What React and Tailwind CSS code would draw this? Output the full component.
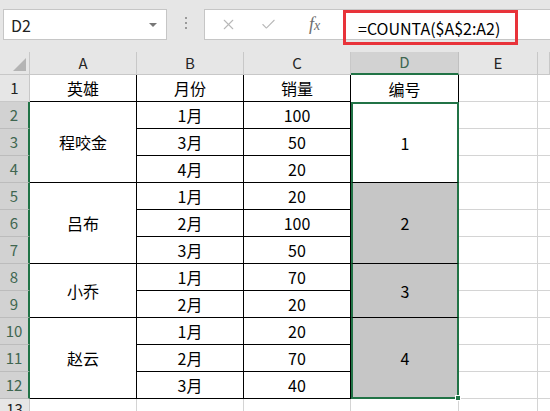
import React from 'react';
import { X, Check } from 'lucide-react';

const font = { fontFamily: '"Noto Sans CJK SC", "Noto Sans", sans-serif' };

const rows = [
  { n: 2, b: '1月', c: '100', a: { t: '程咬金', span: 'row-span-3' }, d: { t: '1', span: 'row-span-3', first: true } },
  { n: 3, b: '3月', c: '50' },
  { n: 4, b: '4月', c: '20' },
  { n: 5, b: '1月', c: '20', a: { t: '吕布', span: 'row-span-3' }, d: { t: '2', span: 'row-span-3' } },
  { n: 6, b: '2月', c: '100' },
  { n: 7, b: '3月', c: '50' },
  { n: 8, b: '1月', c: '70', a: { t: '小乔', span: 'row-span-2' }, d: { t: '3', span: 'row-span-2' } },
  { n: 9, b: '2月', c: '20' },
  { n: 10, b: '1月', c: '20', a: { t: '赵云', span: 'row-span-3' }, d: { t: '4', span: 'row-span-3', last: true } },
  { n: 11, b: '2月', c: '70' },
  { n: 12, b: '3月', c: '40' },
];

function ColHead({ label, sel }) {
  return (
    <div
      className={
        sel
          ? 'flex items-center justify-center bg-[#d2d2d2] border-r border-[#c0c0c0] border-b-2 border-b-[#217346] text-[15px] text-[#3f6650]'
          : 'flex items-center justify-center bg-[#e6e6e6] border-r border-b border-[#c8c8c8] text-[15px] text-[#262626]'
      }
    >
      {label}
    </div>
  );
}

function Cell({ children, className = '' }) {
  return (
    <div className={`flex items-center justify-center text-[16px] text-black ${className}`}>
      {children}
    </div>
  );
}

export default function App() {
  return (
    <div className="w-[550px] h-[411px] overflow-hidden bg-white" style={font}>
      {/* formula bar */}
      <div className="relative h-[52px] bg-[#e6e6e6] flex items-start">
        <div className="mt-[9px] ml-[3px] w-[164px] h-[31px] bg-white border border-[#c6c6c6] flex items-center justify-between pl-[7px] pr-[9px]">
          <span className="text-[16px] text-[#222]">D2</span>
          <span className="w-0 h-0 border-l-[4px] border-r-[4px] border-t-[4px] border-l-transparent border-r-transparent border-t-[#777]" />
        </div>
        <div className="mt-[17px] ml-[18px] flex flex-col gap-[3px]">
          <span className="w-[2px] h-[2px] bg-[#9a9a9a]" />
          <span className="w-[2px] h-[2px] bg-[#9a9a9a]" />
          <span className="w-[2px] h-[2px] bg-[#9a9a9a]" />
        </div>
        <div className="mt-[9px] ml-[17px] flex-1 h-[31px] bg-white border-y border-l border-[#c6c6c6] flex items-center">
          <X className="ml-[15px] text-[#b8b8b8]" size={17} strokeWidth={1.5} />
          <Check className="ml-[23px] text-[#b8b8b8]" size={17} strokeWidth={1.5} />
          <span className="ml-[32px] text-[18px] italic text-[#6e6e6e]" style={{ fontFamily: '"Liberation Serif", serif' }}>
            f<span className="text-[14px]">x</span>
          </span>
        </div>
        <div className="absolute left-[343px] top-[10px] w-[175px] h-[35px] border-[3px] border-[#e8333a] flex items-center pl-[12px]">
          <span className="text-[16px] text-black">=COUNTA($A$2:A2)</span>
        </div>
      </div>

      {/* sheet grid */}
      <div className="grid grid-cols-[30px_107px_107px_107px_108px_79px_1fr] grid-rows-[23px_repeat(12,27px)_13px]">
        {/* corner */}
        <div className="relative bg-[#e6e6e6] border-r border-b border-[#c8c8c8]">
          <span className="absolute right-[3px] bottom-[3px] w-0 h-0 border-l-[14px] border-t-[14px] border-l-transparent border-t-transparent border-r-0 border-b-[0px]" />
          <span className="absolute right-[3px] bottom-[3px] w-0 h-0 border-b-[13px] border-l-[13px] border-b-[#b4b4b4] border-l-transparent" />
        </div>
        <ColHead label="A" />
        <ColHead label="B" />
        <ColHead label="C" />
        <ColHead label="D" sel />
        <ColHead label="E" />
        <ColHead label="" />

        {/* row 1 */}
        <div className="flex items-center justify-center bg-[#e6e6e6] border-r border-b border-[#c8c8c8] text-[15px] text-[#222]">1</div>
        <Cell className="border-r border-b border-black">英雄</Cell>
        <Cell className="border-r border-b border-black">月份</Cell>
        <Cell className="border-r border-b border-black">销量</Cell>
        <Cell className="border-r border-black">编号</Cell>
        <Cell className="border-r border-b border-[#d4d4d4]" />
        <Cell className="border-b border-[#d4d4d4]" />

        {rows.map((r) => (
          <React.Fragment key={r.n}>
            <div className="flex items-center justify-center bg-[#d2d2d2] border-r-2 border-r-[#217346] border-b border-b-[#bcbcbc] text-[15px] text-[#3f6650]">
              {r.n}
            </div>
            {r.a && <Cell className={`${r.a.span} border-r border-b border-black`}>{r.a.t}</Cell>}
            <Cell className="border-r border-b border-black">{r.b}</Cell>
            <Cell className="border-r border-b border-black">{r.c}</Cell>
            {r.d && (
              <Cell
                className={`${r.d.span} relative border-x-2 border-x-[#217346] ${
                  r.d.first ? 'bg-white border-t-2 border-t-[#217346] border-b border-b-black' : r.d.last ? 'bg-[#c6c6c6] border-b-2 border-b-[#217346]' : 'bg-[#c6c6c6] border-b border-b-black'
                }`}
              >
                {r.d.t}
                {r.d.last && <span className="absolute -right-[4px] -bottom-[4px] w-[6px] h-[6px] bg-[#217346] border border-white" />}
              </Cell>
            )}
            <Cell className="border-r border-b border-[#d4d4d4]" />
            <Cell className="border-b border-[#d4d4d4]" />
          </React.Fragment>
        ))}

        {/* row 13 */}
        <div className="flex items-start justify-center bg-[#e6e6e6] border-r border-[#c8c8c8] text-[15px] text-[#222] overflow-hidden leading-[20px]">13</div>
        <Cell className="border-r border-[#d4d4d4]" />
        <Cell className="border-r border-[#d4d4d4]" />
        <Cell className="border-r border-[#d4d4d4]" />
        <Cell className="border-r border-[#d4d4d4]" />
        <Cell className="border-r border-[#d4d4d4]" />
        <Cell />
      </div>
    </div>
  );
}
